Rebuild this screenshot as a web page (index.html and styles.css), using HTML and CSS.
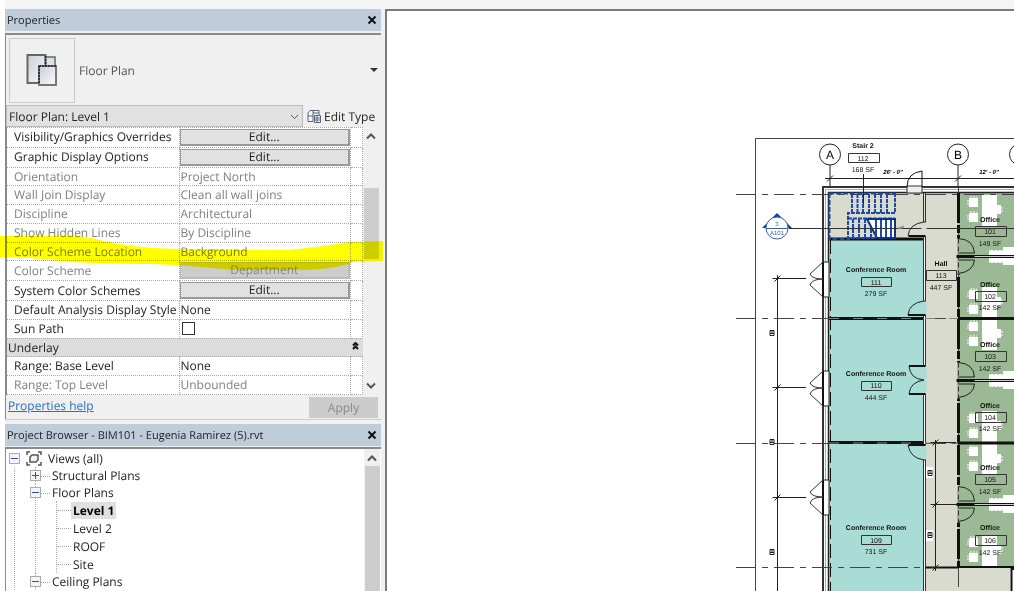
FILE: index.html
```html
<!DOCTYPE html>
<html lang="en">
<head>
    <meta charset="UTF-8">
    <meta name="viewport" content="width=device-width, initial-scale=1.0">
    <title>BIM101 - Floor Plan: Level 1</title>
    <link rel="stylesheet" href="styles.css">
</head>
<body>

<div class="toolbar"></div>

<div class="workspace">
    <div class="sidebar">
        <section class="panel properties">
            <header class="panel-title">
                <h2>Properties</h2>
                <button class="close" aria-label="Close properties"><svg width="10" height="10"><path d="M1.500 1.500l7 7M8.500 1.500l-7 7"/></svg></button>
            </header>
            <div class="type-selector">
                <div class="type-thumb">
                    <svg width="32" height="34" viewBox="0 0 32 34">
                        <defs>
                            <linearGradient id="sheet" x1="0" y1="0" x2="1" y2="1">
                                <stop offset="0" stop-color="#c9ced8"/>
                                <stop offset="1" stop-color="#fafbfc"/>
                            </linearGradient>
                        </defs>
                        <path d="M19 4h10v9H19z" fill="#dde0e6" stroke="#666" stroke-width="1.500"/>
                        <path d="M1.500 2h18v11H13v17H1.500z" fill="url(#sheet)" stroke="#666" stroke-width="2"/>
                        <path d="M13 13h17v19H13z" fill="url(#sheet)" stroke="#777" stroke-width="2"/>
                        <path d="M19.500 3v10M13 13h17M13 13v17" fill="none" stroke="#222" stroke-width="1.500" stroke-dasharray="2 1"/>
                    </svg>
                </div>
                <span>Floor Plan</span>
                <button class="type-arrow" aria-label="Change type"></button>
            </div>
            <div class="instance-bar">
                <div class="select-wrap">
                    <select aria-label="Instance">
                        <option>Floor Plan: Level 1</option>
                    </select>
                    <svg width="9" height="6"><path d="M1 1l3.500 3.500L8 1"/></svg>
                </div>
                <button class="edit-type">
                    <svg width="14" height="14" viewBox="0 0 14 14">
                        <path d="M1 12.500V4l2-2.500h3v11zM1 7h5M6 1.500h6V6M6 4h6" fill="#f4f7fa" stroke="#55667a"/>
                        <path d="M7.500 6.500h6v7h-6zM7.500 9h6M7.500 11h6M10 6.500v7" fill="#fff" stroke="#55667a"/>
                    </svg>
                    Edit Type
                </button>
            </div>
            <div class="grid-area">
                <table class="props">
                    <tbody>
                        <tr><th>Visibility/Graphics Overrides</th><td class="cell-button"><button>Edit...</button></td><td></td></tr>
                        <tr><th>Graphic Display Options</th><td class="cell-button"><button>Edit...</button></td><td></td></tr>
                        <tr class="readonly"><th>Orientation</th><td>Project North</td><td></td></tr>
                        <tr class="readonly"><th>Wall Join Display</th><td>Clean all wall joins</td><td></td></tr>
                        <tr class="readonly"><th>Discipline</th><td>Architectural</td><td></td></tr>
                        <tr class="readonly"><th>Show Hidden Lines</th><td>By Discipline</td><td></td></tr>
                        <tr class="readonly"><th>Color Scheme Location</th><td>Background</td><td></td></tr>
                        <tr class="readonly"><th>Color Scheme</th><td class="cell-button"><button disabled>Department</button></td><td></td></tr>
                        <tr><th>System Color Schemes</th><td class="cell-button"><button>Edit...</button></td><td></td></tr>
                        <tr><th>Default Analysis Display Style</th><td>None</td><td></td></tr>
                        <tr><th><label for="sunPath">Sun Path</label></th><td><input type="checkbox" id="sunPath"></td><td></td></tr>
                        <tr class="group"><th colspan="2">Underlay</th><td><svg width="7" height="8"><path d="M1 3.500l2.500-2.500L6 3.500M1 7l2.500-2.500L6 7"/></svg></td></tr>
                        <tr><th>Range: Base Level</th><td>None</td><td></td></tr>
                        <tr class="readonly"><th>Range: Top Level</th><td>Unbounded</td><td></td></tr>
                    </tbody>
                </table>
                <div class="scrollbar">
                    <svg width="10" height="7"><path d="M1 5.500l4-4 4 4"/></svg>
                    <div class="thumb"></div>
                    <svg width="10" height="7"><path d="M1 1.500l4 4 4-4"/></svg>
                </div>
            </div>
            <footer class="panel-footer">
                <a href="#">Properties help</a>
                <button disabled>Apply</button>
            </footer>
            <svg class="marker" width="383" height="40">
                <path d="M0 3H72Q86 3 103 8Q135 15 178 16L287 17Q320 14 350 9L383 8V28L353 29Q338 36 300 37H233Q200 33 150 31Q90 31 60 28Q30 24 0 24Z"/>
            </svg>
        </section>

        <section class="panel browser">
            <header class="panel-title">
                <h2>Project Browser - BIM101 - Eugenia Ramirez (5).rvt</h2>
                <button class="close" aria-label="Close project browser"><svg width="10" height="10"><path d="M1.500 1.500l7 7M8.500 1.500l-7 7"/></svg></button>
            </header>
            <div class="browser-body">
                <div class="tree">
                    <div class="node root">
                        <button class="expander" aria-label="Collapse"></button>
                        <svg width="16" height="15" viewBox="0 0 16 15">
                            <path d="M4 1H1v3M12 1h3v3M4 14H1v-3M12 14h3v-3" fill="none" stroke="#555" stroke-width="1.500"/>
                            <path d="M6 4h6v5l-2 2H4V6z" fill="#f2f2f6" stroke="#555" stroke-width="1.500"/>
                        </svg>
                        <span>Views (all)</span>
                    </div>
                    <ul class="groups">
                        <li>
                            <div class="node"><button class="expander plus" aria-label="Expand"></button><span>Structural Plans</span></div>
                        </li>
                        <li>
                            <div class="node"><button class="expander" aria-label="Collapse"></button><span>Floor Plans</span></div>
                            <ul class="views">
                                <li><span class="current">Level 1</span></li>
                                <li><span>Level 2</span></li>
                                <li><span>ROOF</span></li>
                                <li><span>Site</span></li>
                            </ul>
                        </li>
                        <li>
                            <div class="node"><button class="expander" aria-label="Collapse"></button><span>Ceiling Plans</span></div>
                        </li>
                    </ul>
                </div>
                <div class="scrollbar">
                    <svg width="10" height="7"><path d="M1 5.500l4-4 4 4"/></svg>
                    <div class="thumb"></div>
                </div>
            </div>
        </section>
    </div>

    <main class="drawing">
        <svg class="plan" width="100%" height="100%" role="img" aria-label="Level 1 floor plan">
            <defs>
                <g id="bubble">
                    <circle r="10.500" fill="#fff" stroke="#222"/>
                    <path d="M0 10.500V33" stroke="#222"/>
                </g>
                <!-- pair of office doors either side of a party wall -->
                <g id="officeDoors" fill="none">
                    <path d="M0-18V18" stroke="#9bb994" stroke-width="3"/>
                    <path d="M0-18V18" stroke="#333" stroke-dasharray="5 3"/>
                    <path d="M0-18Q15-17 16-3.500H0M0 17Q15 15 16 3.500H0" stroke="#222"/>
                    <path d="M-2 0H56" stroke="#111" stroke-width="3"/>
                    <path d="M16 0H56" stroke="#ccc"/>
                </g>
                <!-- casement window in the outer wall -->
                <g id="window">
                    <path d="M0-17H6V18H0z" fill="#fff" stroke="#222"/>
                    <path d="M0-17V18" stroke="#111" stroke-width="2"/>
                    <path d="M0-17L-13-5Q-11 0 0 0Q-11 0-13 6L0 18" fill="none" stroke="#333"/>
                </g>
                <g id="desk" fill="#fff">
                    <path d="M13 0h15v31H13zM0 3h9v9H0zM0 18h9v9H0zM28 10h4v9h-4z"/>
                    <path d="M-1 5v5M-1 20v5M33 12v5M1 2h7M1 17h7" stroke="#fff" stroke-dasharray="2 1"/>
                </g>
                <g id="credenza" fill="#fff">
                    <path d="M0-6h14V7H0zM14-9h11V9H14z"/>
                    <path d="M0-6h14M0 7h14" stroke="#9bb994" stroke-dasharray="2 2"/>
                </g>
                <g id="tick"><path d="M-5 0H5M-3 3L3-3" stroke="#222"/></g>
                <g id="dimBox"><path d="M-2-3h4v5h-4zM-2 0h4M0-3v3" fill="#fff" stroke="#222"/></g>
            </defs>

            <g transform="translate(-387 -11)">
                <path d="M755.500 600V138.500H2000" fill="none" stroke="#444"/>

                <!-- room fills -->
                <path d="M828 193H958V567H1010V600H925V240H828z" fill="#d8dbcd"/>
                <path d="M829 240H924V600H829z" fill="#a9dcd5"/>
                <path d="M958 193H1014V567H958z" fill="#9bb994"/>

                <!-- furniture -->
                <use href="#desk" x="969" y="195"/>
                <use href="#desk" x="969" y="287"/>
                <use href="#desk" x="969" y="319"/>
                <use href="#desk" x="969" y="411"/>
                <use href="#desk" x="969" y="444"/>
                <use href="#desk" x="969" y="535"/>
                <use href="#credenza" x="989" y="256"/>
                <use href="#credenza" x="989" y="380"/>
                <use href="#credenza" x="989" y="504"/>

                <!-- outer walls -->
                <path d="M823 600V187H1014" fill="none" stroke="#333" stroke-width="2"/>
                <path d="M825.500 600V189.500H1014" fill="none" stroke="#aaa"/>
                <path d="M828.500 600V192.500H1014" fill="none" stroke="#222" stroke-width="1.500"/>
                <path d="M830.500 240V600" stroke="#111" stroke-dasharray="14 5"/>

                <!-- grid lines -->
                <g stroke="#444" stroke-dasharray="20 6 6 6">
                    <path d="M736 194.500H1014M736 318.500H1014M736 443.500H1014M736 567.500H1014"/>
                    <path d="M958.500 187V600"/>
                </g>

                <!-- inner walls -->
                <path d="M829 239H924M829 318.500H924M829 442.500H924" stroke="#111" stroke-width="3"/>
                <path d="M958 318.500H1014M958 443H1014" stroke="#111" stroke-width="3"/>
                <path d="M958 567H1014" stroke="#111" stroke-width="2"/>
                <path d="M925.500 567.500H958M1011.500 600V569H1014" fill="none" stroke="#111" stroke-width="2"/>
                <path d="M923.500 193V600M925.500 193V600" stroke="#333"/>
                <path d="M958.500 193V567" stroke="#111" stroke-width="3" stroke-dasharray="30 2 8 2"/>
                <path d="M829 318.500H958M829 443H958" stroke="#888" stroke-dasharray="10 14"/>

                <!-- stair -->
                <g fill="none" stroke="#1d49a8">
                    <path d="M829.500 193V239H850M829 193.500H895" stroke-width="2" stroke-dasharray="5 2"/>
                    <path d="M852 194V213M857.500 194V213M863 194V213M869 194V213M875 194V213M881 194V213M887 194V213" stroke-width="2" stroke-dasharray="4 1"/>
                    <path d="M895 193V213H848V238H895M848 218.500H895" stroke-width="2" stroke-dasharray="4 1"/>
                    <path d="M853 219V238M859 219V238M865 219V238M871 219V238" stroke-width="2" stroke-dasharray="4 1"/>
                    <path d="M867 219H895V238H877z" fill="#fff" stroke="#0c3484" stroke-width="2"/>
                    <path d="M876 220V235M881 220V237M886 220V237M891 220V237" stroke-width="2"/>
                </g>
                <path d="M863.500 174V204" stroke="#222"/>
                <path d="M789 228.500H1014" stroke="#333"/>
                <path d="M898 228.500l6-2" stroke="#999" stroke-width="2"/>

                <!-- doors -->
                <path d="M907 186H922V193H907z" fill="#eee" stroke="#333"/>
                <path d="M907 187Q907 173 922 171V187" fill="none" stroke="#111"/>
                <g fill="none" stroke="#222">
                    <path d="M924 301V315M924 366V394M924 445V460" stroke="#a9dcd5" stroke-width="5"/>
                    <path d="M924 222V236" stroke="#d8dbcd" stroke-width="5"/>
                    <path d="M926 222H924Q909 224 908 236H926M926 301H924Q909 303 908 315H926"/>
                    <path d="M926 366H909Q910 379 924 380Q910 382 909 394H926"/>
                    <path d="M926 445H908Q910 458 924 460H926"/>
                    <path d="M909 236H925M908 315H925M909 366H925M909 394H925M909 445H925" stroke="#111" stroke-width="2"/>
                </g>
                <use href="#officeDoors" x="958.500" y="256.500"/>
                <use href="#officeDoors" x="958.500" y="380.500"/>
                <use href="#officeDoors" x="958.500" y="504.500"/>
                <use href="#window" x="823" y="279"/>
                <use href="#window" x="823" y="388"/>
                <use href="#window" x="823" y="497"/>

                <!-- dimensions -->
                <g stroke="#222">
                    <path d="M826 178.500H1014M777.500 275V600M774 278.500H806M774 387.500H806M774 497.500H806"/>
                    <path d="M935.500 440V571M931 442.500H956M931 504.500H958"/>
                </g>
                <use href="#tick" x="830" y="178.500"/>
                <use href="#tick" x="958" y="178.500"/>
                <use href="#tick" x="777.500" y="278.500"/>
                <use href="#tick" x="777.500" y="387.500"/>
                <use href="#tick" x="777.500" y="497.500"/>
                <use href="#tick" x="935.500" y="442.500"/>
                <use href="#tick" x="935.500" y="504.500"/>
                <use href="#tick" x="935.500" y="567.500"/>
                <use href="#dimBox" x="772" y="333.500"/>
                <use href="#dimBox" x="772" y="442.500"/>
                <use href="#dimBox" x="772" y="552.500"/>
                <path d="M926 467h7v11h-7zM926 530h7v11h-7z" fill="#fff"/>
                <use href="#dimBox" x="930" y="473.500"/>
                <use href="#dimBox" x="930" y="535.500"/>
                <g class="dim">
                    <text x="893" y="174">26' - 0"</text>
                    <text x="989" y="174">12' - 0"</text>
                </g>

                <!-- grid bubbles -->
                <use href="#bubble" x="830" y="154.500"/>
                <use href="#bubble" x="958" y="154.500"/>
                <use href="#bubble" x="1020" y="154.500"/>
                <g class="grid-name">
                    <text x="830" y="159">A</text>
                    <text x="958" y="159">B</text>
                </g>

                <!-- section marker -->
                <path d="M777 213L792 228H762z" fill="#103fae"/>
                <circle cx="777" cy="228" r="11" fill="#fff" stroke="#3a5fb5"/>
                <path d="M766 228.500H788" stroke="#3a5fb5"/>
                <g class="section-name">
                    <text x="777" y="226">3</text>
                    <text x="777" y="235">A101</text>
                </g>

                <!-- room tags -->
                <g fill="none" stroke="#333">
                    <path d="M848.500 153.500h31v9h-31zM861.500 277.500h30v9h-30zM861.500 381.500h30v9h-30zM861.500 535.500h30v9h-30zM926.500 270.500h30v10h-30z"/>
                    <path d="M975.500 226.500h31v10h-31zM975.500 291.500h31v10h-31zM975.500 351.500h31v10h-31zM975.500 412.500h31v10h-31zM975.500 474.500h31v10h-31zM975.500 535.500h31v10h-31z"/>
                </g>
                <g class="tag">
                    <text x="863" y="148" class="name">Stair 2</text><text x="863" y="161">112</text><text x="863" y="172">168 SF</text>
                    <text x="876" y="272" class="name">Conference Room</text><text x="876" y="285">111</text><text x="876" y="296">279 SF</text>
                    <text x="876" y="376" class="name">Conference Room</text><text x="876" y="388">110</text><text x="876" y="400">444 SF</text>
                    <text x="876" y="530" class="name">Conference Room</text><text x="876" y="543">109</text><text x="876" y="554">731 SF</text>
                    <text x="941" y="266" class="name">Hall</text><text x="941" y="278">113</text><text x="941" y="290">447 SF</text>
                    <text x="990" y="222" class="name">Office</text><text x="990" y="234">101</text><text x="990" y="246">149 SF</text>
                    <text x="990" y="287" class="name">Office</text><text x="990" y="299">102</text><text x="990" y="310">142 SF</text>
                    <text x="990" y="347" class="name">Office</text><text x="990" y="359">103</text><text x="990" y="371">142 SF</text>
                    <text x="990" y="408" class="name">Office</text><text x="990" y="420">104</text><text x="990" y="431">142 SF</text>
                    <text x="990" y="470" class="name">Office</text><text x="990" y="482">105</text><text x="990" y="494">142 SF</text>
                    <text x="990" y="530" class="name">Office</text><text x="990" y="543">106</text><text x="990" y="555">142 SF</text>
                </g>
            </g>
        </svg>
    </main>
</div>

</body>
</html>
```

FILE: styles.css
```css
* {
    box-sizing: border-box;
}
body {
    display: flex;
    flex-direction: column;
    height: 100vh;
    margin: 0;
    overflow: hidden;
    background-color: #fff;
    font-family: "Open Sans", "Noto Sans", sans-serif;
    font-size: 12px;
    color: #222;
    text-rendering: geometricPrecision;
}
button, select {
    font: inherit;
    color: inherit;
    text-rendering: inherit;
}
.toolbar {
    height: 9px;
    margin-left: 5px;
    background-color: #f5f5f5;
    flex-shrink: 0;
}
.workspace {
    display: flex;
    flex: 1;
    min-height: 0;
}
.sidebar {
    display: flex;
    flex-direction: column;
    width: 385px;
    padding: 0 4px 0 5px;
    background: linear-gradient(to right, #fff 5px, #f0f0f0 5px);
    flex-shrink: 0;
}
.drawing {
    flex: 1;
    min-width: 0;
    background-color: #fff;
    border-left: 2px solid #7a7a7a;
    border-top: 2px solid #7a7a7a;
}
.plan {
    display: block;
    font-family: "Liberation Sans", Arial, sans-serif;
    text-anchor: middle;
}

/* panels */
.panel-title {
    display: flex;
    align-items: center;
    justify-content: space-between;
    height: 22px;
    padding: 0 4px 0 2px;
    background-color: #bfcddb;
}
.panel-title h2 {
    margin: 0;
    font-size: 11px;
    font-weight: normal;
}
.close {
    display: flex;
    padding: 0;
    border: none;
    background: none;
}
.close svg {
    fill: none;
    stroke: #111;
    stroke-width: 2;
}
.properties {
    position: relative;
    height: 411px;
    border-bottom: 1px solid #ccc;
    flex-shrink: 0;
}
.type-selector {
    display: flex;
    align-items: center;
    gap: 4px;
    height: 72px;
    margin-top: 2px;
    padding: 0 3px;
    border-top: 2px solid #8a8a8a;
    border-left: 1px solid #8a8a8a;
    color: #555;
}
.type-thumb {
    display: flex;
    align-items: center;
    justify-content: center;
    width: 66px;
    height: 65px;
    border: 1px solid #ccc;
}
.type-arrow {
    width: 8px;
    height: 4px;
    margin-left: auto;
    padding: 0;
    border: 4px solid transparent;
    border-top-color: #333;
    border-bottom: none;
    background: none;
}
.instance-bar {
    display: flex;
    height: 22px;
    border-left: 1px solid #8a8a8a;
}
.select-wrap {
    position: relative;
    width: 297px;
}
.select-wrap select {
    width: 100%;
    height: 22px;
    padding: 0 2px;
    border: 1px solid #bbb;
    border-radius: 0;
    background-color: #e1e1e1;
    appearance: none;
}
.select-wrap svg {
    position: absolute;
    right: 4px;
    top: 9px;
    fill: none;
    stroke: #555;
}
.edit-type {
    display: flex;
    align-items: center;
    gap: 3px;
    padding: 0 4px;
    border: none;
    background: none;
    white-space: nowrap;
}

/* property grid */
.grid-area {
    display: flex;
    height: 268px;
}
.props {
    width: 358px;
    height: 268px;
    border-collapse: collapse;
    table-layout: fixed;
    background-color: #fff;
    border-left: 2px solid #8a8a8a;
    line-height: 16px;
}
.props th, .props td {
    padding: 0 0 0 1px;
    border: 1px dotted #aaa;
    font-weight: normal;
    text-align: left;
    white-space: nowrap;
}
.props th {
    width: 173px;
    padding-left: 7px;
}
.props td:last-child {
    width: 12px;
}
.props .cell-button {
    padding: 0;
}
.props button {
    display: block;
    width: 100%;
    height: 17px;
    padding: 0;
    border: 1px solid #999;
    border-right-width: 2px;
    border-bottom-width: 2px;
    background-color: #e1e1e1;
    line-height: 14px;
}
.props button:disabled {
    border-color: #bbb;
    background-color: #ccc;
    color: #888;
}
.props input {
    display: block;
    width: 13px;
    height: 13px;
    margin: 0 1px;
    border: 1px solid #333;
    background-color: #fff;
    appearance: none;
}
.props .readonly {
    color: #808080;
}
.props .group {
    background-color: #dcdcdc;
}
.props .group th, .props .group td {
    padding-left: 1px;
    border-left: none;
    border-right: none;
}
.props .group svg {
    display: block;
    margin-bottom: 4px;
    fill: none;
    stroke: #111;
    stroke-width: 2;
}
.scrollbar {
    display: flex;
    flex-direction: column;
    align-items: center;
    width: 16px;
    padding: 6px 0;
    background-color: #f0f0f0;
    flex-shrink: 0;
}
.scrollbar svg {
    fill: none;
    stroke: #555;
    stroke-width: 2;
    flex-shrink: 0;
}
.thumb {
    width: 15px;
    background-color: #cdcdcd;
}
.properties .thumb {
    height: 71px;
    margin: 48px 0 auto;
}
.panel-footer {
    display: flex;
    justify-content: space-between;
    height: 24px;
    padding: 2px 3px 1px 2px;
    border-left: 1px solid #8a8a8a;
}
.panel-footer a {
    color: #2a6fc0;
}
.panel-footer button {
    width: 69px;
    padding: 0;
    border: none;
    background-color: #ccc;
    color: #888;
}
/* highlighter stroke over the color scheme row */
.marker {
    position: absolute;
    left: -5px;
    top: 224px;
    fill: #ff0;
    mix-blend-mode: multiply;
    pointer-events: none;
}

/* project browser */
.browser {
    display: flex;
    flex-direction: column;
    flex: 1;
    min-height: 0;
    margin-top: 4px;
}
.browser .panel-title {
    flex-shrink: 0;
}
.browser-body {
    display: flex;
    flex: 1;
    min-height: 0;
    margin-top: 1px;
    padding-right: 1px;
    border-top: 2px solid #8a8a8a;
    border-left: 1px solid #8a8a8a;
    background-color: #fff;
}
.browser .scrollbar {
    padding-bottom: 0;
}
.browser .thumb {
    flex: 1;
    margin-top: 4px;
}
.tree {
    flex: 1;
    overflow: hidden;
}
.tree ul {
    margin: 0;
    padding: 0;
    list-style: none;
}
.node {
    display: flex;
    align-items: center;
    height: 17px;
    white-space: nowrap;
}
.root {
    height: 18px;
    gap: 6px;
    padding-left: 3px;
}
.expander {
    position: relative;
    width: 11px;
    height: 11px;
    padding: 0;
    border: 1px solid #aaa;
    background-color: #f4f5fa;
}
.expander::before, .plus::after {
    content: "";
    position: absolute;
    left: 1px;
    top: 4px;
    width: 7px;
    height: 1px;
    background-color: #3c4f8c;
}
.plus::after {
    transform: rotate(90deg);
}
.tree .groups {
    margin-left: 8px;
    padding-left: 20px;
    border-left: 1px dotted #aaa;
}
.groups > li {
    border-left: 1px dotted #aaa;
}
.groups .expander {
    margin-left: -6px;
}
.groups .node span::before, .views li::before {
    content: "";
    display: inline-block;
    width: 9px;
    margin-right: 2px;
    border-top: 1px dotted #aaa;
    vertical-align: middle;
}
.tree .views {
    margin-left: 20px;
    border-left: 1px dotted #aaa;
}
.views li {
    display: flex;
    align-items: center;
    height: 18px;
}
.views li::before {
    width: 14px;
    margin-right: 0;
}
.views span {
    padding: 0 2px;
    line-height: 17px;
}
.views .current {
    background-color: #e0e0e0;
    color: #000;
    font-weight: bold;
}

/* plan text */
.tag {
    font-size: 7px;
    fill: #111;
}
.tag .name {
    font-weight: bold;
}
.dim {
    font-size: 6px;
    font-style: italic;
    font-weight: bold;
}
.grid-name {
    font-size: 12px;
}
.section-name {
    font-size: 6px;
    fill: #3a5fb5;
}
```
